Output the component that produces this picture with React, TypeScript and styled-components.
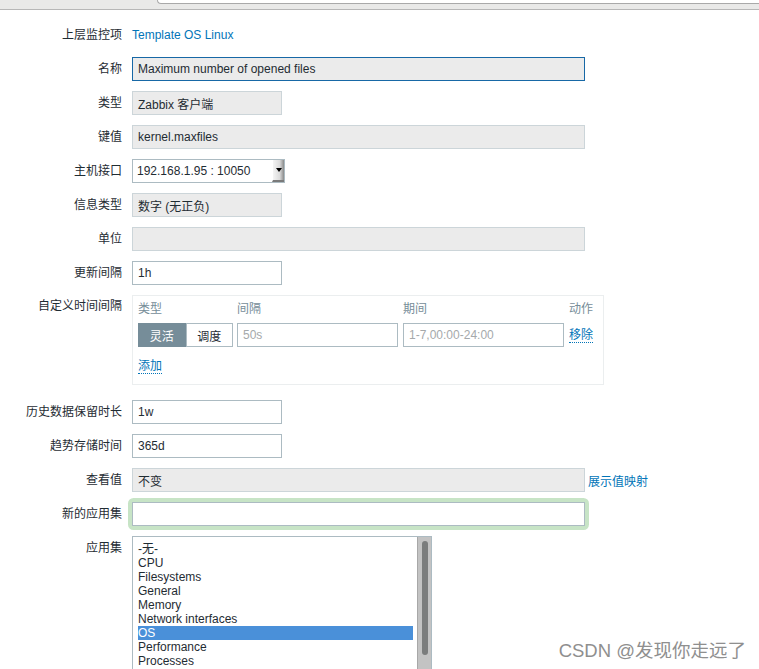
import React, { FC } from 'react';
import styled, { createGlobalStyle } from 'styled-components';

const GlobalStyle = createGlobalStyle`
  html, body {
    margin: 0;
    padding: 0;
    background: #ffffff;
  }
  body {
    font-family: 'Liberation Sans', Arial, 'Noto Sans CJK SC', sans-serif;
    font-size: 12px;
    color: #1f2c33;
  }
`;

const Page = styled.div`
  position: relative;
  width: 759px;
  height: 669px;
  overflow: hidden;
`;

const Chrome = styled.div`
  height: 9px;
  background: #e9e9e8;
  border-bottom: 1px solid #b7b7b7;
  padding-left: 157px;
`;

const ChromeTab = styled.div`
  height: 3px;
  background: #ffffff;
  border-left: 1px solid #a9a9a9;
  border-bottom: 1px solid #a9a9a9;
  border-bottom-left-radius: 4px;
`;

const Form = styled.div`
  display: grid;
  grid-template-columns: 122px 1fr;
  column-gap: 10px;
  row-gap: 10px;
  padding-top: 13px;
  align-items: start;
`;

const Label = styled.div<{ $tall?: boolean }>`
  text-align: right;
  line-height: ${(p) => (p.$tall ? '22px' : '24px')};
  white-space: nowrap;
`;

const Cell = styled.div`
  display: flex;
  align-items: center;
  min-height: 24px;
`;

const Link = styled.a<{ $dotted?: boolean }>`
  color: #0275b8;
  text-decoration: none;
  cursor: pointer;
  ${(p) => (p.$dotted ? 'border-bottom: 1px dotted #0275b8; line-height: 14px;' : '')}
`;

const Field = styled.div<{ $w: number; $readonly?: boolean; $focus?: boolean }>`
  box-sizing: border-box;
  width: ${(p) => p.$w}px;
  height: 24px;
  padding: 0 5px;
  display: flex;
  align-items: center;
  background: ${(p) => (p.$readonly ? '#ebebeb' : '#ffffff')};
  border: 1px solid
    ${(p) => (p.$focus ? '#1768a6' : p.$readonly ? '#ccd5d9' : '#acbbc2')};
  color: #1f2c33;
  white-space: nowrap;
  overflow: hidden;
`;

const Placeholder = styled.span`
  color: #a5a9ab;
`;

const Glow = styled.div`
  border-radius: 2px;
  box-shadow: 0 0 0 4px #c7e4c6;
`;

const SelectBox = styled.div`
  box-sizing: border-box;
  width: 153px;
  height: 24px;
  display: flex;
  align-items: stretch;
  border: 1px solid #acbbc2;
  background: #ffffff;
`;

const SelectText = styled.div`
  flex: 1;
  display: flex;
  align-items: center;
  padding-left: 4px;
`;

const SelectArrow = styled.div`
  width: 11px;
  display: flex;
  align-items: center;
  justify-content: center;
  background: linear-gradient(90deg, #f4f4f4 0%, #dcdcdc 60%, #8a8a8a 100%);
  border-left: 1px solid #ffffff;
  border-bottom: 2px solid #7a7a7a;
  &::after {
    content: '';
    border-left: 3px solid transparent;
    border-right: 3px solid transparent;
    border-top: 4px solid #000000;
  }
`;

const IntervalBox = styled.div`
  box-sizing: border-box;
  width: 472px;
  height: 90px;
  margin-bottom: 5px;
  border: 1px solid #ebeeef;
  padding: 4px 5px 0 5px;
`;

const IntervalGrid = styled.div`
  display: grid;
  grid-template-columns: 94px 161px 161px auto;
  column-gap: 5px;
  row-gap: 5px;
  align-items: center;
`;

const Head = styled.div`
  color: #768d99;
  line-height: 18px;
`;

const Toggle = styled.div`
  display: flex;
  height: 24px;
  width: 95px;
`;

const ToggleBtn = styled.div<{ $on?: boolean }>`
  box-sizing: border-box;
  flex: 1;
  display: flex;
  align-items: center;
  justify-content: center;
  background: ${(p) => (p.$on ? '#768d99' : '#ffffff')};
  color: ${(p) => (p.$on ? '#ffffff' : '#1f2c33')};
  border: 1px solid ${(p) => (p.$on ? '#768d99' : '#acbbc2')};
`;

const AddRow = styled.div`
  margin-top: 12px;
`;

const ListBox = styled.div`
  box-sizing: border-box;
  width: 300px;
  height: 140px;
  border: 1px solid #acbbc2;
  display: flex;
  background: #ffffff;
`;

const ListItems = styled.div`
  flex: 1;
  padding: 5px 4px 0 5px;
`;

const ListItem = styled.div<{ $selected?: boolean }>`
  line-height: 14px;
  height: 14px;
  background: ${(p) => (p.$selected ? '#4a90d9' : 'transparent')};
  color: ${(p) => (p.$selected ? '#ffffff' : '#1f2c33')};
`;

const ScrollTrack = styled.div`
  width: 13px;
  background: #c3c3c3;
  border-left: 1px solid #a8a8a8;
  padding: 4px 0;
  display: flex;
  justify-content: center;
`;

const ScrollThumb = styled.div`
  width: 6px;
  height: 114px;
  border-radius: 3px;
  background: #7b7d7d;
`;

const Watermark = styled.div`
  position: absolute;
  right: 13px;
  bottom: 7px;
  font-family: 'Liberation Sans', Arial, 'Noto Sans CJK SC', sans-serif;
  font-size: 18.5px;
  color: #8f8f8f;
  text-shadow: 0 0 2px #ffffff;
`;

const apps = [
  '-无-',
  'CPU',
  'Filesystems',
  'General',
  'Memory',
  'Network interfaces',
  'OS',
  'Performance',
  'Processes',
];

const App: FC = () => {
  return (
    <Page>
      <GlobalStyle />
      <Chrome>
        <ChromeTab />
      </Chrome>
      <Form>
        <Label>上层监控项</Label>
        <Cell>
          <Link>Template OS Linux</Link>
        </Cell>

        <Label>名称</Label>
        <Field $w={453} $readonly $focus>
          Maximum number of opened files
        </Field>

        <Label>类型</Label>
        <Field $w={150} $readonly>
          Zabbix 客户端
        </Field>

        <Label>键值</Label>
        <Field $w={453} $readonly>
          kernel.maxfiles
        </Field>

        <Label>主机接口</Label>
        <SelectBox>
          <SelectText>192.168.1.95 : 10050</SelectText>
          <SelectArrow />
        </SelectBox>

        <Label>信息类型</Label>
        <Field $w={150} $readonly>
          数字 (无正负)
        </Field>

        <Label>单位</Label>
        <Field $w={453} $readonly />

        <Label>更新间隔</Label>
        <Field $w={150}>1h</Field>

        <Label $tall>自定义时间间隔</Label>
        <IntervalBox>
          <IntervalGrid>
            <Head>类型</Head>
            <Head>间隔</Head>
            <Head>期间</Head>
            <Head>动作</Head>
            <Toggle>
              <ToggleBtn $on>灵活</ToggleBtn>
              <ToggleBtn>调度</ToggleBtn>
            </Toggle>
            <Field $w={161}>
              <Placeholder>50s</Placeholder>
            </Field>
            <Field $w={161}>
              <Placeholder>1-7,00:00-24:00</Placeholder>
            </Field>
            <div>
              <Link $dotted>移除</Link>
            </div>
          </IntervalGrid>
          <AddRow>
            <Link $dotted>添加</Link>
          </AddRow>
        </IntervalBox>

        <Label>历史数据保留时长</Label>
        <Field $w={150}>1w</Field>

        <Label>趋势存储时间</Label>
        <Field $w={150}>365d</Field>

        <Label>查看值</Label>
        <Cell>
          <Field $w={453} $readonly>
            不变
          </Field>
          <Link style={{ marginLeft: 3 }}>展示值映射</Link>
        </Cell>

        <Label>新的应用集</Label>
        <Cell>
          <Glow>
            <Field $w={453} />
          </Glow>
        </Cell>

        <Label>应用集</Label>
        <ListBox>
          <ListItems>
            {apps.map((a) => (
              <ListItem key={a} $selected={a === 'OS'}>
                {a}
              </ListItem>
            ))}
          </ListItems>
          <ScrollTrack>
            <ScrollThumb />
          </ScrollTrack>
        </ListBox>
      </Form>
      <Watermark>CSDN @发现你走远了</Watermark>
    </Page>
  );
};

export default App;
